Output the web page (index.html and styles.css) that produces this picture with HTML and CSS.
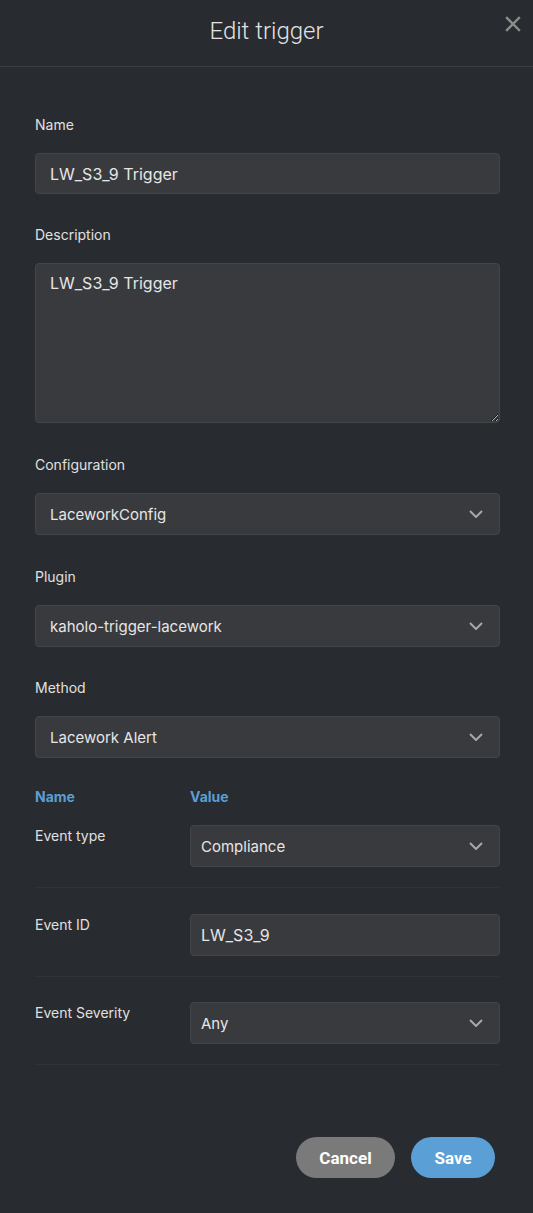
FILE: index.html
```html
<!DOCTYPE html>
<html lang="en">
<head>
<meta charset="utf-8">
<title>Edit trigger</title>
<link rel="stylesheet" href="styles.css">
</head>
<body>
<div class="dialog">
  <header class="header">
    <span></span>
    <h1 class="title">Edit trigger</h1>
    <button class="close" aria-label="Close">
      <svg width="16" height="16" viewBox="0 0 16 16"><path d="M2 2L14 14M14 2L2 14" stroke="#8c8c8c" stroke-width="2.4" stroke-linecap="square"/></svg>
    </button>
  </header>
  <main class="content">
    <div class="field tight">
      <label class="label">Name</label>
      <input class="control input" type="text" value="LW_S3_9 Trigger">
    </div>
    <div class="field">
      <label class="label">Description</label>
      <textarea class="control textarea">LW_S3_9 Trigger</textarea>
    </div>
    <div class="field">
      <label class="label">Configuration</label>
      <div class="control select"><span>LaceworkConfig</span><svg class="chev" width="14" height="8" viewBox="0 0 14 8"><path d="M1 1L7 7L13 1" fill="none" stroke="#a8a8aa" stroke-width="2"/></svg></div>
    </div>
    <div class="field tight">
      <label class="label">Plugin</label>
      <div class="control select"><span>kaholo-trigger-lacework</span><svg class="chev" width="14" height="8" viewBox="0 0 14 8"><path d="M1 1L7 7L13 1" fill="none" stroke="#a8a8aa" stroke-width="2"/></svg></div>
    </div>
    <div class="field">
      <label class="label">Method</label>
      <div class="control select"><span>Lacework Alert</span><svg class="chev" width="14" height="8" viewBox="0 0 14 8"><path d="M1 1L7 7L13 1" fill="none" stroke="#a8a8aa" stroke-width="2"/></svg></div>
    </div>

    <div class="params">
      <div class="params-head">
        <span class="col-name">Name</span>
        <span class="col-value">Value</span>
      </div>
      <div class="param-row">
        <span class="param-label">Event type</span>
        <div class="control select small"><span>Compliance</span><svg class="chev" width="14" height="8" viewBox="0 0 14 8"><path d="M1 1L7 7L13 1" fill="none" stroke="#a8a8aa" stroke-width="2"/></svg></div>
      </div>
      <div class="param-row short">
        <span class="param-label">Event ID</span>
        <input class="control input small" type="text" value="LW_S3_9">
      </div>
      <div class="param-row">
        <span class="param-label">Event Severity</span>
        <div class="control select small"><span>Any</span><svg class="chev" width="14" height="8" viewBox="0 0 14 8"><path d="M1 1L7 7L13 1" fill="none" stroke="#a8a8aa" stroke-width="2"/></svg></div>
      </div>
    </div>

    <div class="actions">
      <button class="btn btn-cancel">Cancel</button>
      <button class="btn btn-save">Save</button>
    </div>
  </main>
</div>
</body>
</html>
```

FILE: styles.css
```css
* { box-sizing: border-box; }
html, body {
  margin: 0;
  padding: 0;
  background: #282b2f;
}
body {
  font-family: Inter, "Noto Sans", "Liberation Sans", sans-serif;
  color: #e2e2e2;
  width: 533px;
  min-height: 1213px;
}
.dialog {
  width: 533px;
}
.header {
  height: 67px;
  border-bottom: 1px solid #3b3e42;
  display: grid;
  grid-template-columns: 1fr auto 1fr;
  align-items: start;
}
.title {
  margin: 0;
  padding-top: 16px;
  font-family: Roboto, "Liberation Sans", sans-serif;
  font-weight: 300;
  font-size: 24px;
  line-height: 30px;
  color: #e4e4e4;
}
.close {
  justify-self: end;
  margin: 16px 12px 0 0;
  padding: 0;
  border: 0;
  background: none;
  width: 16px;
  height: 16px;
  display: flex;
}
.content {
  padding: 49px 33px 0 35px;
}
.field {
  display: flex;
  flex-direction: column;
  margin-bottom: 33px;
}
.field.tight {
  margin-bottom: 32px;
}
.label {
  font-size: 14px;
  line-height: 18px;
  margin-bottom: 19px;
  color: #e0e0e0;
}
.control {
  width: 100%;
  background: #393a3e;
  border: 1px solid #434549;
  border-radius: 4px;
  color: #e6e6e6;
  font-family: Inter, "Noto Sans", "Liberation Sans", sans-serif;
  outline: none;
}
.input {
  height: 41px;
  padding: 0 14px;
  font-size: 16px;
}
.textarea {
  height: 160px;
  padding: 8px 14px;
  font-size: 16px;
  line-height: 22px;
  resize: vertical;
  display: block;
}
.select {
  height: 42px;
  padding: 0 16px 0 14px;
  font-size: 15px;
  display: flex;
  align-items: center;
  justify-content: space-between;
}
.chev { flex: none; }
.params {
  margin-top: -3px;
}
.params-head {
  display: grid;
  grid-template-columns: 155px 1fr;
  font-size: 14px;
  line-height: 18px;
  font-weight: 700;
  color: #5a9fd4;
  margin-bottom: 19px;
}
.param-row {
  display: grid;
  grid-template-columns: 155px 1fr;
  align-items: start;
  padding-bottom: 20px;
  border-bottom: 1px solid #2f3236;
  margin-bottom: 26px;
}
.param-row.short { margin-bottom: 25px; }
.param-row:last-child { margin-bottom: 0; }
.param-label {
  font-size: 14px;
  line-height: 18px;
  padding-top: 2px;
  color: #e0e0e0;
}
.control.small {
  padding-left: 10px;
}
.input.small { height: 42px; }
.actions {
  display: flex;
  justify-content: flex-end;
  gap: 16px;
  padding: 72px 5px 0 0;
}
.btn {
  height: 41px;
  border: 0;
  border-radius: 21px;
  color: #fff;
  font-family: Roboto, "Liberation Sans", sans-serif;
  font-weight: 700;
  font-size: 17px;
  padding: 0;
}
.btn-cancel {
  width: 99px;
  background: #7a7a7a;
}
.btn-save {
  width: 84px;
  background: #5a9fd5;
}
```
